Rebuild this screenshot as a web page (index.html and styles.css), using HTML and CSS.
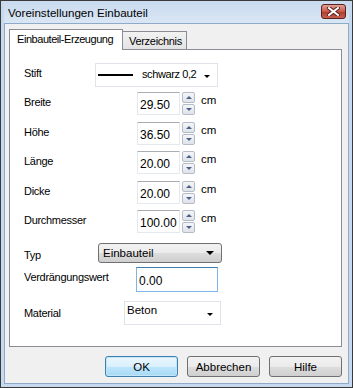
FILE: index.html
```html
<!DOCTYPE html>
<html lang="de">
<head>
    <meta charset="UTF-8">
    <title>Voreinstellungen Einbauteil</title>
    <link rel="stylesheet" href="styles.css">
</head>
<body>
    <div class="window">
        <div class="titlebar">
            <span class="title">Voreinstellungen Einbauteil</span>
            <button class="close-btn" aria-label="Schließen">
                <svg width="13" height="9" viewBox="0 0 13 9">
                    <path d="M2 1 L11 8 M11 1 L2 8" stroke="#5a1e1e" stroke-width="4" stroke-linecap="square"/>
                    <path d="M2 1 L11 8 M11 1 L2 8" stroke="#ffffff" stroke-width="2" stroke-linecap="square"/>
                </svg>
            </button>
        </div>

        <div class="client">
            <div class="tabs">
                <div class="tab active">Einbauteil-Erzeugung</div>
                <div class="tab">Verzeichnis</div>
            </div>

            <div class="panel">
                <!-- Stift -->
                <div class="row row-pen">
                    <span class="label">Stift</span>
                    <div class="combo pen-combo">
                        <span class="pen-line"></span>
                        <span class="combo-text">schwarz 0,2</span>
                        <span class="arrow small"></span>
                    </div>
                </div>

                <!-- Maße -->
                <div class="row num-row">
                    <span class="label">Breite</span>
                    <div class="spin-input">29.50</div>
                    <div class="spinner"><span class="up"></span><span class="down"></span></div>
                    <span class="unit">cm</span>
                </div>
                <div class="row num-row">
                    <span class="label">Höhe</span>
                    <div class="spin-input">36.50</div>
                    <div class="spinner"><span class="up"></span><span class="down"></span></div>
                    <span class="unit">cm</span>
                </div>
                <div class="row num-row">
                    <span class="label">Länge</span>
                    <div class="spin-input">20.00</div>
                    <div class="spinner"><span class="up"></span><span class="down"></span></div>
                    <span class="unit">cm</span>
                </div>
                <div class="row num-row">
                    <span class="label">Dicke</span>
                    <div class="spin-input">20.00</div>
                    <div class="spinner"><span class="up"></span><span class="down"></span></div>
                    <span class="unit">cm</span>
                </div>
                <div class="row num-row">
                    <span class="label">Durchmesser</span>
                    <div class="spin-input">100.00</div>
                    <div class="spinner"><span class="up"></span><span class="down"></span></div>
                    <span class="unit">cm</span>
                </div>

                <!-- Typ -->
                <div class="row row-type">
                    <span class="label">Typ</span>
                    <div class="combo type-combo">
                        <span class="combo-text">Einbauteil</span>
                        <span class="arrow"></span>
                    </div>
                </div>

                <div class="row row-disp">
                    <span class="label">Verdrängungswert</span>
                    <div class="text-input focused">0.00</div>
                </div>

                <div class="row row-mat">
                    <span class="label">Material</span>
                    <div class="combo mat-combo">
                        <span class="combo-text">Beton</span>
                        <span class="arrow small"></span>
                    </div>
                </div>
            </div>

            <div class="buttons">
                <button class="btn default">OK</button>
                <button class="btn">Abbrechen</button>
                <button class="btn">Hilfe</button>
            </div>
        </div>
    </div>
</body>
</html>
```

FILE: styles.css
```css
body {
    margin: 0;
    font-family: "Liberation Sans", Arial, sans-serif;
    font-size: 11px;
    color: #000;
    background: #fff;
}

.window {
    width: 353px;
    height: 388px;
    box-sizing: border-box;
    border: 1px solid #3a3a3a;
    background: #c7d9ee;
    padding: 0 3px 3px 3px;
    display: flex;
    flex-direction: column;
}

.titlebar {
    height: 22px;
    display: flex;
    align-items: center;
    justify-content: space-between;
    padding: 0 3px 0 4px;
    background: linear-gradient(#c9dbef, #d9e6f4);
}

.title {
    font-size: 11.6px;
    color: #000;
}

.close-btn {
    width: 25px;
    height: 15px;
    margin-top: -2px;
    padding: 0;
    border: 1px solid #5b2222;
    border-radius: 3px;
    background: linear-gradient(#e0a294, #c75a4a 50%, #b03a2c 51%, #c8604e);
    display: flex;
    align-items: center;
    justify-content: center;
}

.client {
    flex: 1;
    background: #f0f0f0;
    border: 1px solid #8fa9c8;
    padding: 4px 6px 0 4px;
}

.tabs {
    display: flex;
    align-items: flex-end;
    height: 21px;
    position: relative;
    z-index: 1;
}

.tab {
    height: 17px;
    width: 57px;
    padding: 0 0 0 6px;
    border: 1px solid #898c95;
    border-bottom: none;
    border-left: none;
    background: linear-gradient(#f2f2f2, #e3e3e3);
    line-height: 18px;
    white-space: nowrap;
    letter-spacing: -0.3px;
}

.tab.active {
    height: 20px;
    width: 105px;
    padding: 0 0 0 7px;
    border-left: 1px solid #898c95;
    background: #fff;
    line-height: 19px;
    margin-bottom: -1px;
    letter-spacing: -0.45px;
}

.panel {
    height: 298px;
    box-sizing: border-box;
    border: 1px solid #898c95;
    background: #fff;
    padding: 13px 0 0 14px;
}

.row {
    display: flex;
    align-items: flex-start;
}

.label {
    letter-spacing: -0.3px;
    white-space: nowrap;
}

/* Stift */
.row-pen {
    height: 24px;
}

.row-pen .label {
    width: 71px;
    padding-top: 4px;
}

.combo {
    box-sizing: border-box;
    display: flex;
    align-items: center;
    position: relative;
}

.pen-combo {
    width: 123px;
    height: 24px;
    border: 1px solid #e2e3ea;
    background: #fff;
    padding: 0 0 2px 2px;
}

.pen-line {
    width: 35px;
    height: 2px;
    background: #000;
    margin: 2px 9px 0 0;
}

.combo-text {
    font-size: 11.5px;
    white-space: nowrap;
}

.pen-combo .combo-text {
    font-size: 11px;
    letter-spacing: -0.4px;
}

.arrow {
    position: absolute;
    right: 7px;
    top: 50%;
    margin-top: -2px;
    border-left: 4px solid transparent;
    border-right: 4px solid transparent;
    border-top: 4px solid #000;
}

.arrow.small {
    margin-top: 0;
    border-left-width: 3px;
    border-right-width: 3px;
    border-top-width: 3px;
}

/* Maßfelder */
.num-row {
    height: 23px;
    margin-top: 6.5px;
}

.row-pen + .num-row {
    margin-top: 5px;
}

.num-row .label {
    width: 113px;
    padding-top: 4px;
}

.spin-input,
.text-input {
    box-sizing: border-box;
    height: 23px;
    border: 1px solid #e3e9ef;
    border-top-color: #abadb3;
    background: #fff;
    font-size: 12px;
    padding: 5px 0 0 2px;
}

.spin-input {
    width: 43px;
}

.spinner {
    width: 13px;
    margin-left: 2px;
    display: flex;
    flex-direction: column;
    gap: 1px;
}

.spinner span {
    box-sizing: border-box;
    height: 11px;
    border: 1px solid #b4bcc8;
    border-radius: 2px;
    background: linear-gradient(#f4f6f9, #dfe3ea);
    display: flex;
    align-items: center;
    justify-content: center;
}

.spinner .up::after,
.spinner .down::after {
    content: "";
    border-left: 3px solid transparent;
    border-right: 3px solid transparent;
}

.spinner .up::after {
    border-bottom: 3px solid #4d6185;
}

.spinner .down::after {
    border-top: 3px solid #4d6185;
}

.unit {
    margin-left: 6px;
    padding-top: 2px;
    font-size: 11.5px;
}

/* Typ */
.row-type {
    height: 20px;
    margin-top: 10px;
}

.row-type .label {
    width: 74px;
    padding-top: 6px;
}

.type-combo {
    width: 124px;
    height: 20px;
    border: 1px solid #707070;
    border-radius: 3px;
    background: linear-gradient(#f2f2f2, #ebebeb 50%, #dddddd 51%, #cfcfcf);
    padding-left: 4px;
}

/* Verdrängungswert */
.row-disp {
    margin-top: 4px;
    height: 25px;
}

.row-disp .label {
    width: 112px;
    padding-top: 4px;
}

.text-input {
    width: 82px;
    height: 25px;
    padding-top: 6px;
}

.text-input.focused {
    border-color: #7eb4ea;
    border-top-color: #3d7bad;
}

/* Material */
.row-mat {
    margin-top: 9px;
    height: 24px;
}

.row-mat .label {
    width: 100px;
    padding-top: 6px;
}

.mat-combo {
    width: 97px;
    height: 24px;
    border: 1px solid #e2e3ea;
    background: #fff;
    padding: 0 0 6px 2px;
}

/* Schaltflächen */
.buttons {
    display: flex;
    justify-content: flex-end;
    gap: 9px;
    margin-top: 9px;
}

.btn {
    width: 73px;
    height: 21px;
    padding: 0;
    border: 1px solid #707070;
    border-radius: 3px;
    background: linear-gradient(#f2f2f2, #ebebeb 50%, #dddddd 51%, #cfcfcf);
    font-family: "Liberation Sans", Arial, sans-serif;
    font-size: 11.5px;
    color: #000;
}

.btn.default {
    border-color: #3c7fb1;
    background: linear-gradient(#eaf6fd, #d9f0fc 50%, #bee6fd 51%, #a7d9f5);
    box-shadow: inset 0 0 0 1px #c4e5f6;
}
```
